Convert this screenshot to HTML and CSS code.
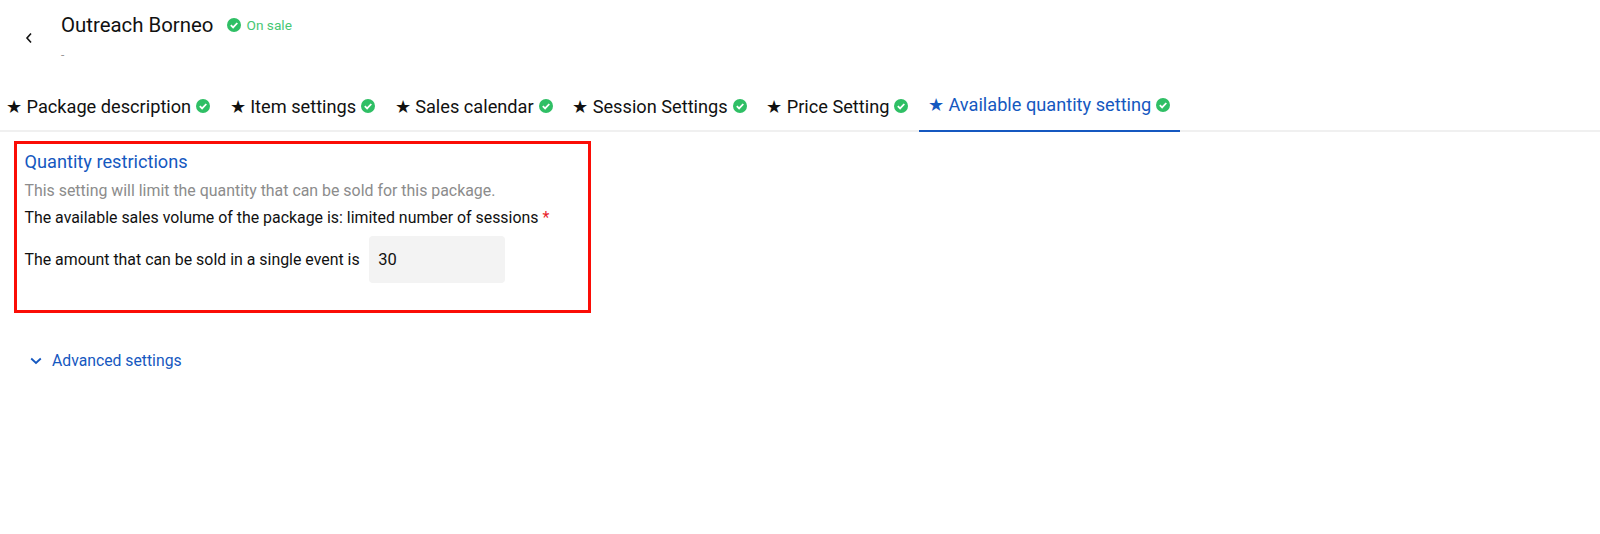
FILE: index.html
```html
<!DOCTYPE html>
<html>
<head>
    <title>Outreach Borneo</title>
    <link rel="stylesheet" href="styles.css">
</head>
<body>
    <svg class="defs" width="0" height="0">
        <symbol id="check" viewBox="0 0 14 14">
            <circle cx="7" cy="7" r="7" fill="#2fbf65"/>
            <path d="M3.8 7.2 6.1 9.4 10.3 5" fill="none" stroke="#fff" stroke-width="1.8"/>
        </symbol>
    </svg>

    <header class="header">
        <svg class="back" width="8" height="12" viewBox="0 0 8 12">
            <path d="M6 1.5 2 6l4 4.5" fill="none" stroke="#111" stroke-width="1.6"/>
        </svg>
        <div class="heading">
            <div class="title-row">
                <h1 class="title">Outreach Borneo</h1>
                <svg class="status-icon"><use href="#check"/></svg>
                <span class="status">On sale</span>
            </div>
            <div class="subtitle">-</div>
        </div>
    </header>

    <nav class="tabs">
        <a class="tab"><span class="star">★</span>Package description<svg class="tab-check"><use href="#check"/></svg></a>
        <a class="tab"><span class="star">★</span>Item settings<svg class="tab-check"><use href="#check"/></svg></a>
        <a class="tab"><span class="star">★</span>Sales calendar<svg class="tab-check"><use href="#check"/></svg></a>
        <a class="tab"><span class="star">★</span>Session Settings<svg class="tab-check"><use href="#check"/></svg></a>
        <a class="tab"><span class="star">★</span>Price Setting<svg class="tab-check"><use href="#check"/></svg></a>
        <a class="tab active"><span class="star">★</span>Available quantity setting<svg class="tab-check"><use href="#check"/></svg></a>
    </nav>

    <main class="content">
        <section class="restrictions">
            <h2 class="section-title">Quantity restrictions</h2>
            <p class="hint">This setting will limit the quantity that can be sold for this package.</p>
            <p class="line">The available sales volume of the package is: limited number of sessions <span class="required">*</span></p>
            <div class="amount-row">
                <label class="line" for="amount">The amount that can be sold in a single event is</label>
                <input class="amount" id="amount" type="text" value="30">
            </div>
        </section>

        <a class="advanced">
            <svg width="12" height="8" viewBox="0 0 12 8">
                <path d="M1.2 1.5 6 6l4.8-4.5" fill="none" stroke="#1558c0" stroke-width="1.8"/>
            </svg>
            Advanced settings
        </a>
    </main>
</body>
</html>
```

FILE: styles.css
```css
* {
    box-sizing: border-box;
}
body {
    margin: 0;
    background: #fff;
    color: #111;
    font-family: Roboto, "Liberation Sans", sans-serif;
}
.defs {
    position: absolute;
}
.header {
    display: flex;
    height: 86px;
    padding: 13px 0 0 25px;
}
.back {
    margin: 19px 28px 0 0;
}
.title-row {
    display: flex;
    align-items: center;
    height: 24px;
}
.title {
    margin: 0 14px 0 0;
    font-size: 20.4px;
    font-weight: 400;
}
.status-icon {
    width: 14px;
    height: 14px;
    margin-right: 5px;
}
.status {
    color: #46c774;
    font-size: 13.7px;
}
.subtitle {
    margin-top: 10px;
    color: #999;
    font-size: 12px;
    line-height: 16px;
}
.tabs {
    display: flex;
    height: 46px;
    border-bottom: 2px solid #f0f0f0;
}
.tab {
    display: flex;
    align-items: center;
    height: 46px;
    padding: 0 4px 6px 6px;
    font-size: 18.2px;
    margin-right: 9.5px;
}
.star {
    width: 20.5px;
    font-size: 18px;
}
.tab-check {
    width: 14px;
    height: 14px;
    margin-left: 5px;
}
.tab.active {
    margin-left: -3px;
    padding: 0 10px 7px 9px;
    color: #1558c0;
    border-bottom: 2px solid #1558c0;
}
.content {
    padding: 9px 14px;
}
.restrictions {
    width: 577px;
    height: 172px;
    padding: 7px 7.5px;
    border: 3px solid #fb0d06;
}
.section-title {
    margin: 0;
    color: #1558c0;
    font-size: 18.2px;
    font-weight: 400;
    line-height: 22px;
}
.hint {
    margin: 8px 0 0;
    color: #8c8c8c;
    font-size: 15.9px;
    line-height: 20px;
}
.line {
    margin: 7px 0 0;
    font-size: 15.9px;
    line-height: 20px;
}
.required {
    color: #e8202a;
}
.amount-row {
    display: flex;
    align-items: center;
    gap: 9.5px;
    margin-top: 8px;
}
.amount-row .line {
    margin: 0;
}
.amount {
    width: 136px;
    height: 47px;
    padding: 0 9px;
    border: 0;
    border-radius: 4px;
    background: #f3f3f3;
    color: #111;
    font: 16.5px Roboto, sans-serif;
}
.advanced {
    display: flex;
    align-items: center;
    gap: 10px;
    margin: 38px 0 0 16px;
    color: #1558c0;
    font-size: 15.75px;
    line-height: 20px;
}
```
